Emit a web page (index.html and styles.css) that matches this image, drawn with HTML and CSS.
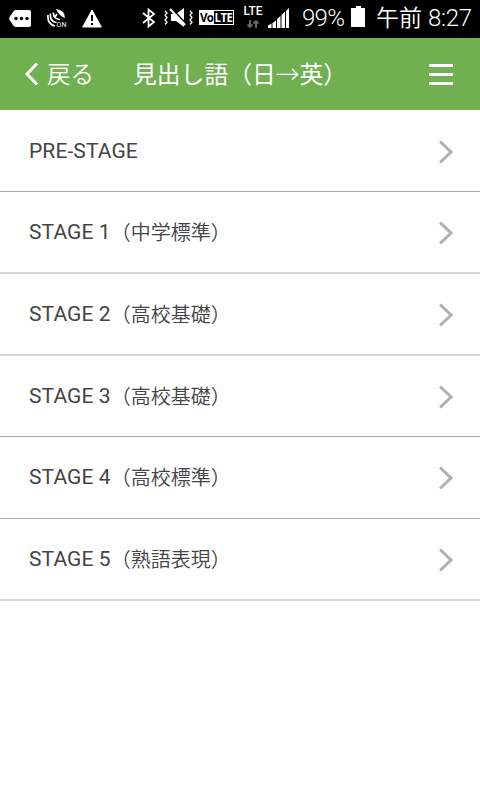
FILE: index.html
```
<!DOCTYPE html>
<html lang="ja">
<head>
<meta charset="UTF-8">
<meta name="viewport" content="width=device-width, initial-scale=1.0">
<title>見出し語（日→英）</title>
<link rel="stylesheet" href="styles.css">
</head>
<body>
<!-- Status bar -->
<div class="status-bar">
    <div class="status-group">
        <svg class="icon-message" width="22" height="18" viewBox="0 0 22 18">
            <path d="M7 0H20Q22 0 22 2V15Q22 17 20 17H7Q5 17 4 15L0.5 10Q0 8.500.5 7L4 2Q5 0 7 0Z" fill="#fff"/>
            <circle cx="7" cy="8.500" r="1.700"/><circle cx="12.500" cy="8.500" r="1.700"/><circle cx="18" cy="8.500" r="1.700"/>
        </svg>
        <svg class="icon-gps" width="20" height="21" viewBox="0 0 20 21">
            <path d="M9 1Q18 2 18 10Q12 8 9 1Z" fill="#fff"/>
            <path d="M10 6L8 9M6.500 4.500Q6 11 13 11.500M3.500 5.500Q2.500 13.500 9.500 14.500M1 7Q0 16 8 18" fill="none" stroke="#fff" stroke-width="1.700"/>
            <text x="9.500" y="19" font-size="7" textLength="10">ON</text>
        </svg>
        <svg class="icon-warning" width="20" height="19" viewBox="0 0 20 19">
            <path d="M10 1L19.300 18H.7Z" fill="#fff" stroke="#fff" stroke-linejoin="round"/>
            <path d="M10 6V12M10 14V16" stroke="#000" stroke-width="2"/>
        </svg>
    </div>
    <div class="status-group">
        <svg class="icon-bluetooth" width="14" height="20" viewBox="0 0 14 20">
            <path d="M1 5L12 14L6.500 18.500V1.500L12 6L1 15" fill="none" stroke="#fff" stroke-width="1.800"/>
        </svg>
        <svg class="icon-mute" width="29" height="20" viewBox="0 0 29 20">
            <path d="M7 6H12L20 0V19L12 13H7Z" fill="#fff"/>
            <path d="M8 1L22 16" stroke="#000" stroke-width="2"/>
            <path d="M6 1L21 17" stroke="#fff" stroke-width="2"/>
            <path d="M1 3L3 5L1 7L3 9.500L1 12L3 14L1 16.500M26 3L28 5L26 7L28 9.500L26 12L28 14L26 16.500" fill="none" stroke="#fff" stroke-width="1.300"/>
        </svg>
        <div class="volte"><span class="volte-vo">Vo</span><span class="volte-lte">LTE</span></div>
        <div class="network">
            <span>LTE</span>
            <svg width="12" height="8" viewBox="0 0 12 8">
                <path d="M3 0V7M.5 4.500L3 7L5.500 4.500M9 8V1M6.500 3.500L9 1L11.500 3.500" fill="none" stroke="#666" stroke-width="1.900"/>
            </svg>
        </div>
        <svg class="icon-signal" width="21" height="20" viewBox="0 0 21 20">
            <path d="M0 17.500L3.500 15.500V20H0ZM4.500 15L8 12.500V20H4.500ZM9 11L12.500 8V20H9ZM13.500 7L17 3.500V20H13.500ZM18 3L21 0V20H18Z" fill="#fff"/>
        </svg>
        <span class="battery-level">99%</span>
        <svg class="icon-battery" width="14" height="21" viewBox="0 0 14 21">
            <path d="M5 0H10V2H14V21H0V2H5Z" fill="#fff"/>
        </svg>
        <span class="clock-period">午前</span>
        <span class="clock-time">8:27</span>
    </div>
</div>

<!-- Header -->
<header class="header">
    <a href="#" class="back">
        <svg width="14" height="24" viewBox="0 0 14 24">
            <path d="M12 1.500L2 12L12 22.500" fill="none" stroke="#fff" stroke-width="3"/>
        </svg>
        <span>戻る</span>
    </a>
    <h1 class="title">見出し語（日<span class="to">→</span>英）</h1>
    <button class="menu-btn" aria-label="メニュー">
        <span></span>
        <span></span>
        <span></span>
    </button>
</header>

<!-- Stage list -->
<ul class="stage-list">
    <li>
        <span>PRE-STAGE</span>
        <svg class="arrow" width="14" height="24" viewBox="0 0 14 24"><path d="M1 1.500L12 12L1 22.500"/></svg>
    </li>
    <li class="soft">
        <span>STAGE 1<span class="level">（中学標準）</span></span>
        <svg class="arrow" width="14" height="24" viewBox="0 0 14 24"><path d="M1 1.500L12 12L1 22.500"/></svg>
    </li>
    <li class="soft">
        <span>STAGE 2<span class="level">（高校基礎）</span></span>
        <svg class="arrow" width="14" height="24" viewBox="0 0 14 24"><path d="M1 1.500L12 12L1 22.500"/></svg>
    </li>
    <li class="short">
        <span>STAGE 3<span class="level">（高校基礎）</span></span>
        <svg class="arrow" width="14" height="24" viewBox="0 0 14 24"><path d="M1 1.500L12 12L1 22.500"/></svg>
    </li>
    <li>
        <span>STAGE 4<span class="level">（高校標準）</span></span>
        <svg class="arrow" width="14" height="24" viewBox="0 0 14 24"><path d="M1 1.500L12 12L1 22.500"/></svg>
    </li>
    <li class="soft">
        <span>STAGE 5<span class="level">（熟語表現）</span></span>
        <svg class="arrow" width="14" height="24" viewBox="0 0 14 24"><path d="M1 1.500L12 12L1 22.500"/></svg>
    </li>
</ul>
</body>
</html>
```
FILE: styles.css
```
* {
    box-sizing: border-box;
}
body {
    margin: 0;
    background-color: #fefefe;
    color: #444;
    font-family: Roboto, "Noto Sans CJK JP", sans-serif;
}
svg {
    display: block;
    flex-shrink: 0;
}
/* Status bar */
.status-bar {
    display: flex;
    justify-content: space-between;
    height: 38px;
    padding: 0 8px 0 9px;
    background-color: #000;
    color: #fff;
    white-space: nowrap;
}
.status-group {
    display: flex;
    align-items: flex-start;
}
.icon-message {
    margin-top: 10px;
}
.icon-gps {
    margin: 8px 0 0 16px;
    fill: #fff;
}
.icon-warning {
    margin: 9px 0 0 15px;
}
.icon-bluetooth {
    margin-top: 8px;
}
.icon-mute {
    margin: 8px 0 0 8px;
}
.volte {
    display: flex;
    width: 35px;
    height: 15px;
    margin: 10px 0 0 6px;
    border: 1px solid #fff;
    background-color: #fff;
    color: #000;
    font: bold 11.5px/13px "Open Sans", sans-serif;
    letter-spacing: -0.6px;
}
.volte-vo {
    width: 14px;
}
.volte-lte {
    flex: 1;
    background-color: #000;
    color: #fff;
    text-align: center;
}
.network {
    display: flex;
    flex-direction: column;
    align-items: center;
    width: 20px;
    margin: 6px 0 0 9px;
    font-size: 12px;
    font-weight: 500;
    line-height: 11px;
}
.network svg {
    margin-top: 3px;
}
.icon-signal {
    margin: 8px 0 0 5px;
}
.battery-level,
.clock-period,
.clock-time {
    font-size: 24px;
    font-weight: 350;
    line-height: 37px;
}
.battery-level {
    width: 44px;
    margin-left: 13px;
    letter-spacing: -0.7px;
}
.icon-battery {
    margin: 6px 0 0 5px;
}
.clock-period {
    width: 46px;
    margin-left: 11px;
    font-size: 23px;
    line-height: 38px;
}
.clock-time {
    width: 44px;
    margin-left: 6px;
    letter-spacing: -0.3px;
}
/* Header */
.header {
    display: flex;
    align-items: center;
    height: 72px;
    padding: 0 27px 0 25px;
    background-color: #70b050;
    color: #fff;
}
.back {
    display: flex;
    align-items: center;
    width: 108px;
    color: #fff;
    font-size: 23.5px;
    font-weight: 350;
    line-height: 36px;
    text-decoration: none;
}
.back span {
    margin-left: 8px;
    padding-top: 1px;
}
.title {
    flex: 1;
    margin: 0;
    padding-top: 2px;
    font-size: 23.8px;
    font-weight: 400;
    line-height: 36px;
    white-space: nowrap;
}
.to {
    font-weight: 300;
}
.menu-btn {
    display: flex;
    flex-direction: column;
    gap: 6px;
    width: 24px;
    padding: 0;
    border: 0;
    background: none;
}
.menu-btn span {
    height: 3px;
    background-color: #fff;
}
/* Stage list */
.stage-list {
    margin: 0;
    padding: 0;
    list-style: none;
}
.stage-list li {
    display: flex;
    justify-content: space-between;
    align-items: center;
    height: 82px;
    padding: 0 27px 0 29px;
    border-bottom: 1px solid #aaa;
    font-size: 21px;
    line-height: 24px;
    letter-spacing: 0.1px;
}
.stage-list .soft {
    border-bottom: 2px solid #d6d6d6;
}
.stage-list .short {
    height: 81px;
}
.short + li {
    padding-bottom: 1px;
}
.level {
    font-size: 20px;
    font-weight: 350;
    line-height: 20px;
    letter-spacing: 0;
    vertical-align: -1px;
}
.arrow {
    margin-top: 2px;
}
.arrow path {
    fill: none;
    stroke: #b0b0b0;
    stroke-width: 3;
}
```
